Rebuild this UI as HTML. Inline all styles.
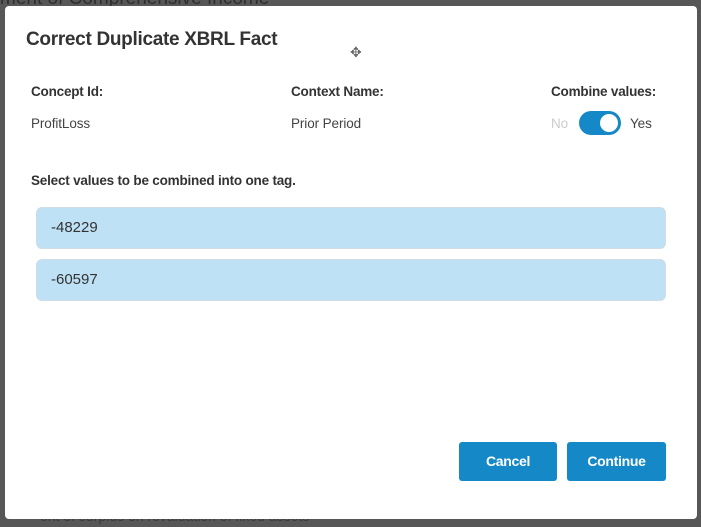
<!DOCTYPE html>
<html><head><style>
*{margin:0;padding:0;box-sizing:border-box}
body{width:701px;height:527px;background:#575757;position:relative;overflow:hidden;font-family:"Liberation Sans",sans-serif;color:#333}
.bg{position:absolute;color:#2e2e2e;font-size:19px}
.modal{position:absolute;left:5px;top:6px;width:692px;height:513px;background:#fff;border-radius:4px}
.t{position:absolute;white-space:nowrap}
.lb{font-size:13.5px;font-weight:bold;letter-spacing:-0.2px}
.v{font-size:13.5px;color:#444;letter-spacing:-0.1px}
.box{position:absolute;left:31px;width:630px;height:42px;background:#bee1f5;border:1px solid #cfdde6;border-radius:6px;font-size:15px;padding:11px 0 0 14px;color:#333}
.btn{position:absolute;top:436px;height:39px;background:#1589c8;color:#fff;border-radius:3px;font-weight:bold;font-size:14px;text-align:center;line-height:39px;letter-spacing:-0.3px}
</style></head><body>
<div class="bg" style="left:0;top:-12px">ment of Comprehensive Income</div>
<div class="bg" style="left:40px;top:508px;font-size:14px;color:#3a3a3a">ent of surplus on revaluation of fixed assets</div>
<div class="modal">
<div class="t" style="left:21px;top:23px;font-size:19px;font-weight:bold;color:#333;letter-spacing:-0.3px">Correct Duplicate XBRL Fact</div>
<div class="t" style="left:345px;top:38px;font-size:14px;color:#666">✥</div>
<div class="t lb" style="left:26px;top:78px">Concept Id:</div>
<div class="t lb" style="left:286px;top:78px">Context Name:</div>
<div class="t lb" style="left:546px;top:78px">Combine values:</div>
<div class="t v" style="left:26px;top:110px">ProfitLoss</div>
<div class="t v" style="left:286px;top:110px">Prior Period</div>
<div class="t v" style="left:546px;top:110px;color:#ccc">No</div>
<div style="position:absolute;left:574px;top:105px;width:42px;height:24px;border-radius:12px;background:#1589c8"><div style="position:absolute;right:3px;top:3px;width:18px;height:18px;border-radius:50%;background:#fff"></div></div>
<div class="t v" style="left:625px;top:110px">Yes</div>
<div class="t lb" style="left:26px;top:167px;font-size:13.5px">Select values to be combined into one tag.</div>
<div class="box" style="top:201px">-48229</div>
<div class="box" style="top:253px">-60597</div>
<div class="btn" style="left:454px;width:98px">Cancel</div>
<div class="btn" style="left:562px;width:99px">Continue</div>
</div>
</body></html>
